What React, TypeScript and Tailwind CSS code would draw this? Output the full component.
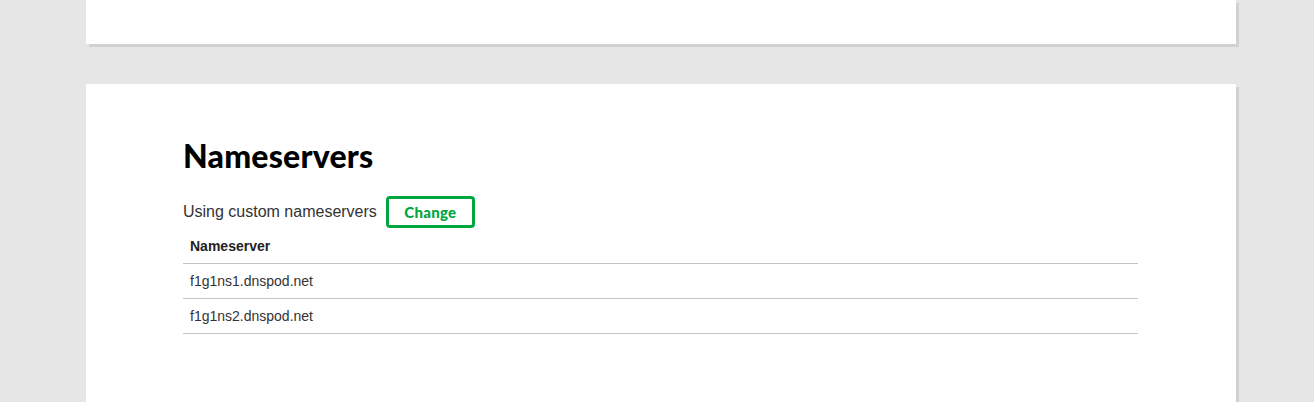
export default function App() {
  const rows = ["f1g1ns1.dnspod.net", "f1g1ns2.dnspod.net"];
  return (
    <div className="w-[1314px] h-[402px] overflow-hidden bg-[#e6e6e6]" style={{ fontFamily: '"Liberation Sans", Arial, sans-serif' }}>
      <div className="ml-[86px] w-[1150px] h-[44px] bg-white shadow-[3px_3px_0_0_#d1d1d1]" />
      <div className="ml-[86px] mt-[40px] w-[1150px] h-[400px] bg-white shadow-[3px_3px_0_0_#d1d1d1] pt-[52px] px-[97px]">
        <div className="w-[955px]">
          <h2 className="text-[32px] leading-[40px] font-black text-black tracking-[0.2px]" style={{ fontFamily: 'Lato, Inter, sans-serif' }}>
            Nameservers
          </h2>
          <div className="mt-[20px] flex items-center gap-[9px]">
            <span className="text-[16px] text-[#333]">Using custom nameservers</span>
            <button className="w-[89px] h-[32px] border-[3px] border-[#00a63f] rounded-[4px] text-[#00a63f] text-[15px] font-black tracking-[0.3px]" style={{ fontFamily: 'Lato, Inter, sans-serif' }}>
              Change
            </button>
          </div>
          <div className="mt-[1px]">
            <div className="h-[35px] border-b border-[#c4c4c4] px-[7px] flex items-center text-[14px] font-bold text-[#222]">Nameserver</div>
            {rows.map((r) => (
              <div key={r} className="h-[35px] border-b border-[#c4c4c4] px-[7px] flex items-center text-[14px] text-[#333]">{r}</div>
            ))}
          </div>
        </div>
      </div>
    </div>
  );
}
